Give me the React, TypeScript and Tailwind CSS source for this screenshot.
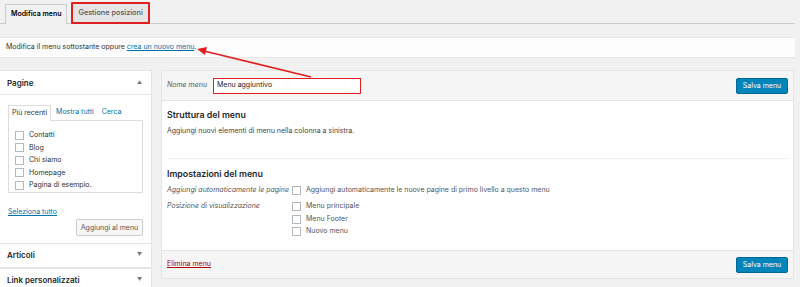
import { ReactNode } from 'react';

function Checkbox() {
  return <span className="inline-block w-[9px] h-[9px] border border-[#b4b9be] bg-white shrink-0" />;
}

function CheckRow({ label }: { label: string }) {
  return (
    <div className="flex items-center gap-[5px] h-[12.5px]">
      <Checkbox />
      <span>{label}</span>
    </div>
  );
}

function BlueButton({ children }: { children: ReactNode }) {
  return (
    <button className="h-[16px] w-[52px] bg-[#0085ba] border border-[#006799] text-white rounded-[2px] text-[7px] leading-none">
      {children}
    </button>
  );
}

function SideHeader({ title, up }: { title: string; up?: boolean }) {
  return (
    <div className="flex items-center justify-between h-[24px] pl-[7px] pr-[9px] border-b border-[#e5e5e5]">
      <span className="font-semibold text-[8px] text-[#23282d]">{title}</span>
      <span className="text-[5px] text-[#72777c]">{up ? '▲' : '▼'}</span>
    </div>
  );
}

export default function App() {
  const pages = ['Contatti', 'Blog', 'Chi siamo', 'Homepage', 'Pagina di esempio.'];
  return (
    <div
      className="relative w-[800px] h-[287px] overflow-hidden bg-[#f1f1f1] text-[7px] text-[#444]"
      style={{ fontFamily: 'Inter, "Open Sans", sans-serif' }}
    >
      {/* tabs */}
      <div className="flex items-end gap-[4px] h-[24px] pl-[5px] mr-[5px] border-b border-[#ccc]">
        <div className="h-[20px] px-[5px] flex items-center border border-[#ccc] border-b-0 bg-[#f1f1f1] -mb-px pb-px font-semibold text-[7px] text-[#000]">
          Modifica menu
        </div>
        <div className="h-[22px] px-[5px] mb-[-1px] flex items-center bg-[#e5e5e5] border-2 border-[#e02020] rounded-[1px] font-medium text-[7.3px] text-[#555]">
          Gestione posizioni
        </div>
      </div>

      {/* notice */}
      <div className="mt-[13px] mr-[5px] h-[21px] bg-[#fcfcfc] border-y border-[#e8e8e8] flex items-center pl-[6px] text-[#333]">
        Modifica il menu sottostante oppure&nbsp;
        <span className="text-[#0073aa] underline">crea un nuovo menu</span>.
      </div>

      {/* main */}
      <div className="flex mt-[12px] gap-[9px] mr-[6px]">
        {/* left column */}
        <div className="w-[152px] shrink-0">
          <div className="bg-white border border-[#e5e5e5] border-l-0">
            <SideHeader title="Pagine" up />
            <div className="px-[8px] pt-[9px] pb-[7px]">
              <div className="flex items-end h-[16px] relative">
                <div className="px-[3px] h-[16px] flex items-center border border-[#ddd] border-b-0 bg-white -mb-px relative z-10 text-[#333]">
                  Più recenti
                </div>
                <div className="px-[5px] h-[15px] flex items-center text-[#0073aa]">Mostra tutti</div>
                <div className="px-[3px] h-[15px] flex items-center text-[#0073aa]">Cerca</div>
              </div>
              <div className="border border-[#ddd] h-[73px] pl-[6px] pt-[8px] text-[#333]">
                {pages.map((p) => (
                  <CheckRow key={p} label={p} />
                ))}
              </div>
              <div className="mt-[14px] text-[#0073aa] underline">Seleziona tutto</div>
              <div className="flex justify-end mt-[1px]">
                <button className="h-[17px] w-[67px] border border-[#ccc] bg-[#f7f7f7] rounded-[2px] text-[#555] text-[7px] leading-none">
                  Aggiungi al menu
                </button>
              </div>
            </div>
          </div>
          <div className="bg-white border border-[#e5e5e5] border-l-0 border-t-0">
            <SideHeader title="Articoli" />
          </div>
          <div className="bg-white border border-[#e5e5e5] border-l-0 border-t-0">
            <SideHeader title="Link personalizzati" />
          </div>
        </div>

        {/* right panel */}
        <div className="flex-1 border border-[#e5e5e5] bg-white h-[209px] flex flex-col">
          <div className="h-[30px] bg-[#f5f5f5] border-b border-[#e5e5e5] flex items-center pl-[5px] pr-[5px]">
            <span className="italic text-[#555] w-[46px]">Nome menu</span>
            <div className="w-[148px] h-[16px] border-[1.5px] border-[#e02020] bg-white flex items-center pl-[3px] text-[#222]">
              Menu aggiuntivo
            </div>
            <div className="flex-1" />
            <BlueButton>Salva menu</BlueButton>
          </div>
          <div className="flex-1 px-[5px] pt-[7px]">
            <div className="text-[8.8px] font-semibold text-[#23282d]">Struttura del menu</div>
            <div className="mt-[5px] text-[#444]">Aggiungi nuovi elementi di menu nella colonna a sinistra.</div>
            <div className="mt-[21px] border-t border-[#eee]" />
            <div className="mt-[8px] text-[8.8px] font-semibold text-[#23282d]">Impostazioni del menu</div>
            <div className="flex mt-[4px] text-[#555]">
              <span className="italic w-[125px] shrink-0 leading-[12.5px]">Aggiungi automaticamente le pagine</span>
              <CheckRow label="Aggiungi automaticamente le nuove pagine di primo livello a questo menu" />
            </div>
            <div className="flex mt-[4px] text-[#555]">
              <span className="italic w-[125px] shrink-0 leading-[12px]">Posizione di visualizzazione</span>
              <div>
                <CheckRow label="Menu principale" />
                <CheckRow label="Menu Footer" />
                <CheckRow label="Nuovo menu" />
              </div>
            </div>
          </div>
          <div className="h-[28px] bg-[#f5f5f5] border-t border-[#e5e5e5] flex items-center justify-between px-[5px]">
            <span className="text-[#a00] underline">Elimina menu</span>
            <BlueButton>Salva menu</BlueButton>
          </div>
        </div>
      </div>

      {/* red arrow */}
      <svg className="absolute left-0 top-0 pointer-events-none" width="800" height="287">
        <line x1="311" y1="77" x2="204" y2="51" stroke="#e02020" strokeWidth="1.6" />
        <polygon points="197,49 207,47 205,55" fill="#e02020" />
      </svg>
    </div>
  );
}
